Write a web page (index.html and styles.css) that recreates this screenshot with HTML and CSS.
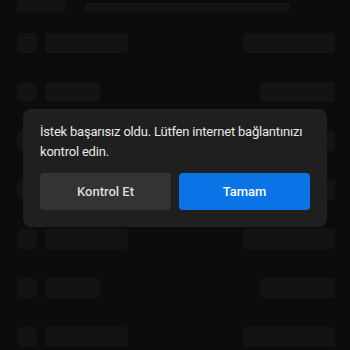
FILE: index.html
```html
<!DOCTYPE html>
<html lang="tr">
<head>
<meta charset="utf-8">
<link rel="stylesheet" href="styles.css">
</head>
<body>
<div class="page">
  <div class="header">
    <div class="sk sk-title"></div>
    <div class="sk sk-search"></div>
  </div>
  <div class="list">
    <div class="row"><div class="sk avatar"></div><div class="sk name long"></div><div class="spacer"></div><div class="sk meta long"></div></div>
    <div class="row"><div class="sk avatar"></div><div class="sk name short"></div><div class="spacer"></div><div class="sk meta short"></div></div>
    <div class="row"><div class="sk avatar"></div><div class="sk name long"></div><div class="spacer"></div><div class="sk meta long"></div></div>
    <div class="row"><div class="sk avatar"></div><div class="sk name short"></div><div class="spacer"></div><div class="sk meta short"></div></div>
    <div class="row"><div class="sk avatar"></div><div class="sk name long"></div><div class="spacer"></div><div class="sk meta long"></div></div>
    <div class="row"><div class="sk avatar"></div><div class="sk name short"></div><div class="spacer"></div><div class="sk meta short"></div></div>
    <div class="row"><div class="sk avatar"></div><div class="sk name long"></div><div class="spacer"></div><div class="sk meta long"></div></div>
  </div>
</div>
<div class="overlay">
  <div class="dialog">
    <p class="message">İstek başarısız oldu. Lütfen internet bağlantınızı kontrol edin.</p>
    <div class="actions">
      <button class="btn btn-secondary">Kontrol Et</button>
      <button class="btn btn-primary">Tamam</button>
    </div>
  </div>
</div>
</body>
</html>
```
FILE: styles.css
```css
* { box-sizing: border-box; }
html, body {
  margin: 0;
  padding: 0;
  width: 350px;
  height: 350px;
  background: #0c0c0c;
  overflow: hidden;
  font-family: Roboto, "Noto Sans", sans-serif;
}
.page {
  padding: 0 15px 0 17px;
}
.sk {
  background: #131313;
  border-radius: 3px;
}
.header {
  display: flex;
  align-items: flex-end;
  gap: 20px;
  height: 12px;
}
.sk-title { width: 48px; height: 12px; border-radius: 0 0 3px 3px; }
.sk-search { width: 205px; height: 9px; }
.list {
  display: flex;
  flex-direction: column;
  gap: 29px;
  padding-top: 21px;
}
.row {
  display: flex;
  align-items: center;
  height: 20px;
}
.avatar { width: 20px; height: 20px; border-radius: 6px; margin-right: 8px; }
.name { height: 20px; }
.name.long { width: 83px; }
.name.short { width: 55px; }
.spacer { flex: 1; }
.meta { height: 20px; }
.meta.long { width: 92px; }
.meta.short { width: 75px; }

.overlay {
  position: absolute;
  inset: 0;
}
.dialog {
  position: absolute;
  left: 23px;
  top: 109px;
  width: 304px;
  height: 118px;
  background: #1f1f1f;
  border-radius: 8px;
  padding: 13px 17px 17px;
  display: flex;
  flex-direction: column;
}
.message {
  margin: 0;
  color: #e8e8e8;
  font-size: 13px;
  letter-spacing: -0.2px;
  line-height: 20px;
}
.actions {
  display: flex;
  gap: 8px;
  margin-top: auto;
}
.btn {
  flex: 1;
  height: 37px;
  border: none;
  border-radius: 4px;
  font-family: Roboto, "Noto Sans", sans-serif;
  font-size: 13px;
  font-weight: 500;
}
.btn-secondary { background: #333333; color: #dcdcdc; }
.btn-primary { background: #0a74e6; color: #ffffff; }
```
